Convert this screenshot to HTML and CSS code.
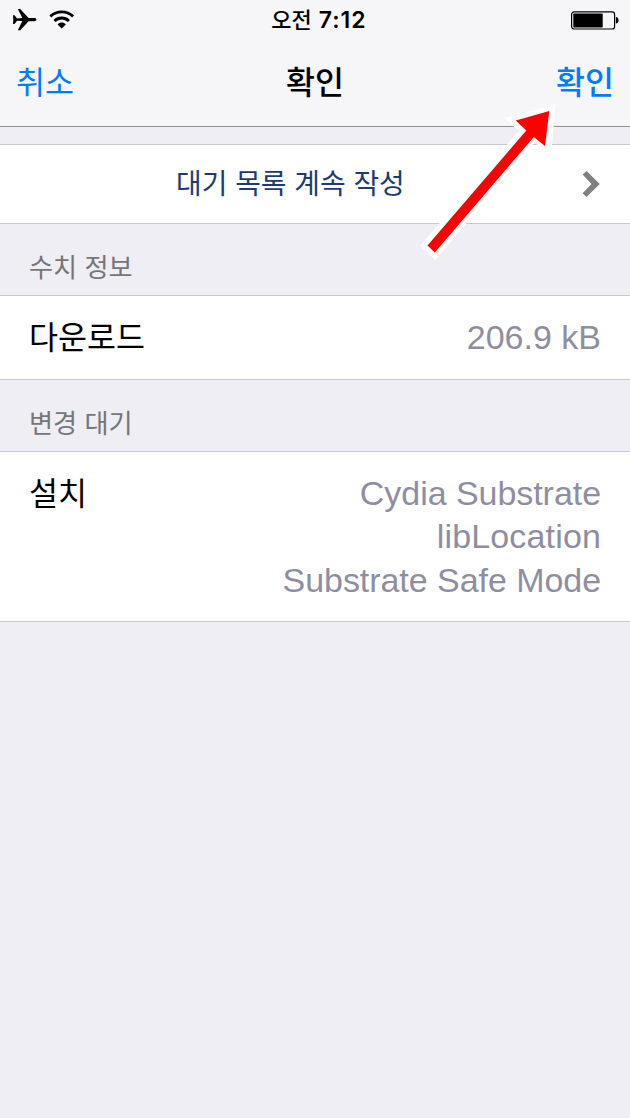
FILE: index.html
```html
<!DOCTYPE html>
<html lang="ko">
<head>
<meta charset="utf-8">
<title>확인</title>
<link rel="stylesheet" href="styles.css">
</head>
<body>
<div class="screen">
  <header class="top">
    <div class="status">
      <div class="signals">
        <svg class="plane" width="25" height="24" viewBox="0 0 25 24"><path d="M24.4 11.6c0-1-.8-1.6-2.2-1.6h-5.6L8.2 1H5.9l4.4 9.1-5.2.3L2.5 7.3H1l.3 4.3L1 16h1.5l2.6-3.2 5.2.3-4.4 9.1h2.3l8.4-9h5.6c1.4 0 2.2-.6 2.2-1.6z"/></svg>
        <svg class="wifi" width="26" height="20" viewBox="0 0 26 20"><path class="arc" d="M1.3 6.4C7.9.4 17.5.4 24.1 6.4M5.5 10.9c4-3.9 10.4-3.9 14.4 0"/><path d="M8.6 14.4c2.4-2.6 5.8-2.6 8.2 0l-4.1 4.2z"/></svg>
      </div>
      <div class="time"><span class="ampm">오전</span> <span class="clock">7:12</span></div>
      <div class="power">
        <svg width="49" height="20" viewBox="0 0 49 20"><rect class="shell" x="1.6" y="1.8" width="43" height="17.2" rx="2.6"/><rect x="3.3" y="3.5" width="29.4" height="14" rx=".7"/><path d="M45.9 7c1.7.2 2.7 1.4 2.7 3.2s-1 3.1-2.7 3.3z"/></svg>
      </div>
    </div>
    <nav class="nav">
      <span class="cancel">취소</span>
      <h1 class="title">확인</h1>
      <span class="confirm">확인</span>
    </nav>
  </header>
  <main>
    <div class="row queue">
      <span class="queue-label">대기 목록 계속 작성</span>
      <svg class="chevron" width="20" height="28" viewBox="0 0 20 28"><path d="M.6 4.6 4.6 1 17.8 14 4.5 27 .6 23.3 9.5 14z"/></svg>
    </div>
    <h2 class="heading">수치 정보</h2>
    <div class="row download"><span class="label">다운로드</span><span class="value">206.9 kB</span></div>
    <h2 class="heading">변경 대기</h2>
    <div class="row install"><span class="label">설치</span><span class="value"><span class="package">Cydia Substrate</span><span class="library">libLocation</span><span class="package">Substrate Safe Mode</span></span></div>
  </main>
  <svg class="pointer" width="150" height="170" viewBox="410 95 150 170"><path class="halo" d="M420 246 518.8 131 505 118 555.5 104.3 551.3 155 534.5 142.5 435.5 260z"/><path class="arrow" d="M427.5 245.5 526.3 130.5 515.7 120.5 549.3 111 545 146 533.8 137 434.8 252.5z"/></svg>
</div>
</body>
</html>
```
FILE: styles.css
```css
* { box-sizing: border-box; }
body { margin: 0; background: #efeef4; font-family: "Liberation Sans", "Noto Sans CJK KR", sans-serif; }
.screen { position: relative; width: 630px; height: 1118px; overflow: hidden; }
svg { display: block; }
.top { height: 127px; background: #f6f6f8; border-bottom: 1px solid #8e8e93; }
.status { display: grid; grid-template-columns: 1fr auto 1fr; height: 40px; align-items: center; padding: 0 11px 0 12px; }
.signals { display: flex; gap: 12px; align-items: center; }
.arc { fill: none; stroke: #000; stroke-width: 2.8; }
.time { display: flex; gap: 7px; align-items: center; padding-left: 7px; font-size: 22px; line-height: 40px; font-weight: 500; }
.ampm { padding-bottom: 3px; line-height: 37px; font-family: "Noto Sans CJK KR", sans-serif; }
.clock { font-family: Inter, sans-serif; font-size: 23px; font-weight: 600; letter-spacing: 1px; }
.power { justify-self: end; }
.shell { fill: none; stroke: #000; stroke-width: 1.2; }
.nav { display: grid; grid-template-columns: 1fr auto 1fr; height: 80px; align-items: center; padding: 0 16px; font: 31.5px/80px "Noto Sans CJK KR", sans-serif; }
.title { margin: 0; font-size: inherit; font-weight: 500; }
.cancel, .confirm { color: #007aff; }
.confirm { justify-self: end; font-weight: 500; }
main { padding-top: 17px; }
.row { display: flex; background: #fff; border: 0 solid #c8c7cc; border-width: 1px 0; }
.queue { height: 80px; align-items: center; justify-content: space-between; padding: 0 28px 0 176px; }
.queue-label { padding-bottom: 4px; color: #1f3a70; font: 400 27.9px/72px "Noto Sans CJK KR", sans-serif; }
.chevron { fill: #808080; }
.heading { margin: 0; height: 71px; padding: 15px 29px 0; color: #75757a; font: 400 26.2px/54px "Noto Sans CJK KR", sans-serif; }
.download, .install { justify-content: space-between; padding: 20px 29px 0 29px; }
.download { height: 85px; }
.install { height: 171px; }
.label { margin-top: -2px; font: 31.5px/43px "Noto Sans CJK KR", sans-serif; }
.value { display: flex; flex-direction: column; color: #8e8e9f; font-size: 34px; line-height: 43.3px; text-align: right; }
.package { letter-spacing: -.05px; }
.library { letter-spacing: .15px; }
.pointer { position: absolute; left: 410px; top: 95px; }
.halo { fill: #fff; }
.arrow { fill: #f00; }
```
